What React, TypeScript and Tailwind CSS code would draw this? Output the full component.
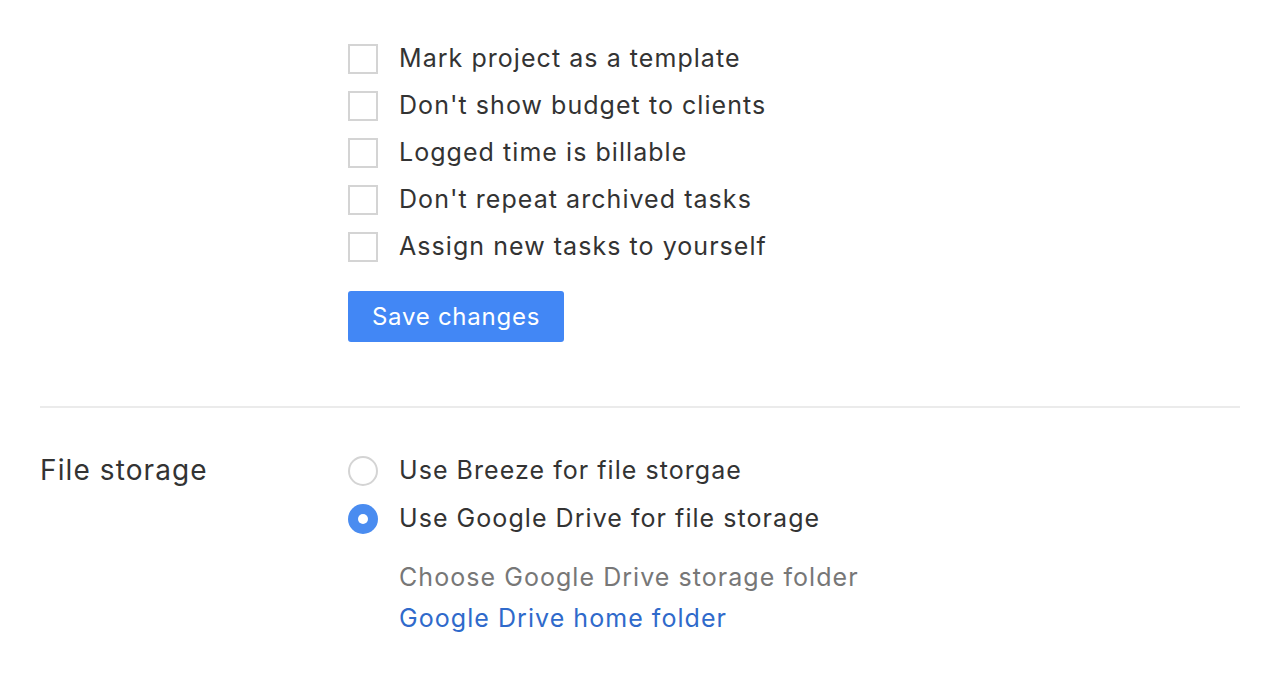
import { useState } from "react";

const OPTIONS = [
  "Mark project as a template",
  "Don't show budget to clients",
  "Logged time is billable",
  "Don't repeat archived tasks",
  "Assign new tasks to yourself",
];

function Checkbox({ label }: { label: string }) {
  const [checked, setChecked] = useState(false);
  return (
    <label className="flex h-[47px] cursor-pointer items-center">
      <span
        onClick={() => setChecked(!checked)}
        className={
          "flex h-[30px] w-[30px] shrink-0 items-center justify-center border-2 " +
          (checked ? "border-[#4a8cf0] bg-[#4a8cf0]" : "border-[#d4d4d4] bg-white")
        }
      />
      <span className="ml-[21px]">{label}</span>
    </label>
  );
}

function Radio({
  label,
  selected,
  onSelect,
}: {
  label: string;
  selected: boolean;
  onSelect: () => void;
}) {
  return (
    <div className="flex h-[48px] cursor-pointer items-center" onClick={onSelect}>
      {selected ? (
        <span className="flex h-[30px] w-[30px] shrink-0 items-center justify-center rounded-full bg-[#4a8cf0]">
          <span className="h-[10px] w-[10px] rounded-full bg-white" />
        </span>
      ) : (
        <span className="h-[30px] w-[30px] shrink-0 rounded-full border-2 border-[#d4d4d4] bg-white" />
      )}
      <span className="ml-[21px]">{label}</span>
    </div>
  );
}

export default function App() {
  const [storage, setStorage] = useState("drive");

  return (
    <div className="min-h-screen bg-white pl-10 pr-[34px] font-['Inter',sans-serif] text-[25px] tracking-[1.05px] text-[#333]">
      <div className="pl-[308px] pt-[35px]">
        {OPTIONS.map((opt) => (
          <Checkbox key={opt} label={opt} />
        ))}
        <button className="mt-[21px] h-[51px] w-[216px] rounded-[3px] bg-[#4287f5] text-[24px] tracking-[0.75px] text-white">
          Save changes
        </button>
      </div>

      <div className="mt-[64px] border-t-2 border-[#ebebeb]" />

      <div className="flex pt-[39px]">
        <div className="w-[308px] shrink-0 pt-[2px] text-[28px] tracking-[1.1px]">File storage</div>
        <div>
          <Radio
            label="Use Breeze for file storgae"
            selected={storage == "breeze"}
            onSelect={() => setStorage("breeze")}
          />
          <Radio
            label="Use Google Drive for file storage"
            selected={storage == "drive"}
            onSelect={() => setStorage("drive")}
          />
          <div className="pl-[51px] pt-[16px]">
            <div className="text-[#777]">Choose Google Drive storage folder</div>
            <a className="mt-[3px] block text-[#2f6acb]" href="#">
              Google Drive home folder
            </a>
          </div>
        </div>
      </div>
    </div>
  );
}
